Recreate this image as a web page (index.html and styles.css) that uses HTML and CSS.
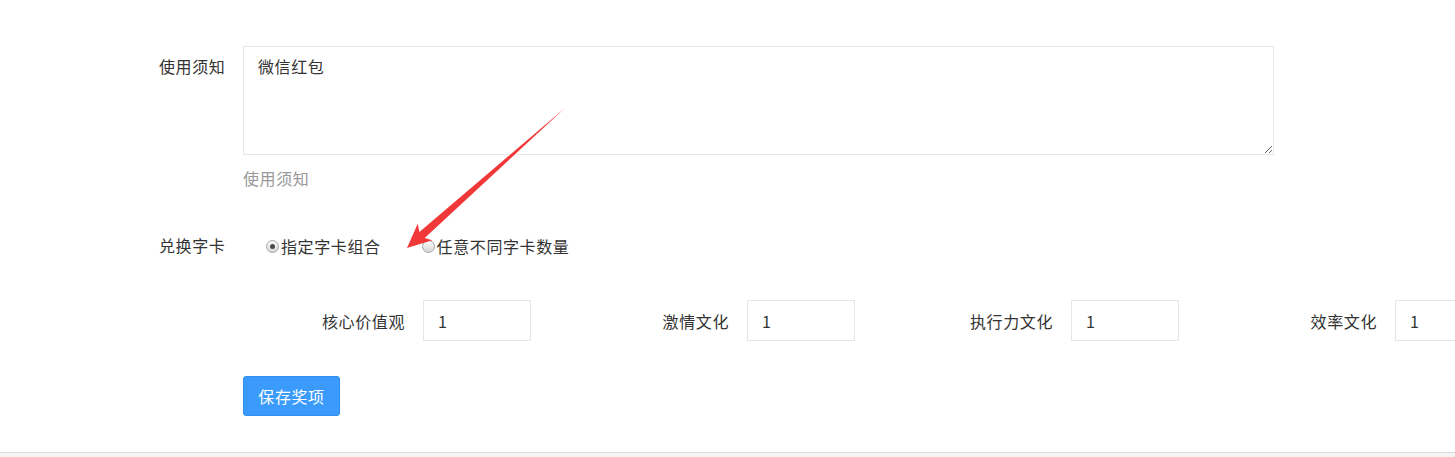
FILE: index.html
```html
<!DOCTYPE html>
<html lang="zh-CN">
  <head>
    <meta charset="UTF-8" />
    <meta name="viewport" content="width=device-width, initial-scale=1.0" />
    <title>奖项设置</title>
    <link rel="stylesheet" href="styles.css">
  </head>
  <body>
    <div class="page">
      <form class="form">
        <div class="form-row">
          <label class="form-label">使用须知</label>
          <div class="form-field">
            <textarea class="notice-input">微信红包</textarea>
            <p class="help-text">使用须知</p>
          </div>
        </div>

        <div class="form-row radio-row">
          <label class="form-label">兑换字卡</label>
          <div class="form-field radios">
            <label class="radio-item">
              <input type="radio" name="mode" class="radio" checked />指定字卡组合
            </label>
            <label class="radio-item">
              <input type="radio" name="mode" class="radio" />任意不同字卡数量
            </label>
          </div>
        </div>

        <div class="card-grid">
          <div class="card-item">
            <span class="card-label">核心价值观</span>
            <input type="text" class="card-input" value="1" />
          </div>
          <div class="card-item">
            <span class="card-label">激情文化</span>
            <input type="text" class="card-input" value="1" />
          </div>
          <div class="card-item">
            <span class="card-label">执行力文化</span>
            <input type="text" class="card-input" value="1" />
          </div>
          <div class="card-item">
            <span class="card-label">效率文化</span>
            <input type="text" class="card-input" value="1" />
          </div>
        </div>

        <div class="actions">
          <button type="button" class="save-btn">保存奖项</button>
        </div>
      </form>

      <!-- annotation arrow drawn on top of the screenshot -->
      <svg class="arrow" width="1455" height="457" viewBox="0 0 1455 457">
        <polygon
          points="407,248 417.7,223.8 419.4,232 565,108 424.7,238 432.3,240.2"
          fill="#f03838"
        />
      </svg>
    </div>
    <div class="page-bottom"></div>
  </body>
</html>
```

FILE: styles.css
```css
* {
  margin: 0;
  padding: 0;
  box-sizing: border-box;
}

html,
body {
  height: 457px;
  overflow: hidden;
}

body {
  background: #fff;
  font-family: "Noto Sans CJK SC", "Microsoft YaHei", sans-serif;
  font-size: 16px;
  line-height: 22px;
  letter-spacing: 0.6px;
  color: #333;
}

.page {
  position: relative;
  height: 452px;
  padding-top: 46px;
}

.form-row {
  display: flex;
  padding-left: 159px;
}

.form-label {
  width: 84px;
  flex-shrink: 0;
  padding-top: 9px;
}

.form-field {
  flex: 1;
}

.notice-input {
  display: block;
  width: 1031px;
  height: 109px;
  padding: 8px 14px;
  border: 1px solid #e6e6e6;
  font-family: inherit;
  font-size: 16px;
  line-height: 22px;
  letter-spacing: 0.6px;
  color: #333;
  resize: vertical;
  outline: none;
}

.help-text {
  margin-top: 12px;
  margin-bottom: 1px;
  color: #999;
}

.radio-row {
  margin-top: 44px;
}

.radio-row .form-label {
  padding-top: 0;
}

.radios {
  display: flex;
  padding-left: 23px;
  padding-top: 1px;
}

.radio-item {
  display: flex;
  align-items: center;
  margin-right: 41px;
}

.radio {
  appearance: none;
  -webkit-appearance: none;
  width: 13px;
  height: 13px;
  margin-right: 2px;
  border: 1px solid #a6a6a6;
  border-radius: 50%;
  background: linear-gradient(#fdfdfd, #d6d6d6);
  position: relative;
}

.radio:checked::after {
  content: "";
  position: absolute;
  left: 3px;
  top: 3px;
  width: 5px;
  height: 5px;
  border-radius: 50%;
  background: #4a4a4a;
}

.card-grid {
  display: grid;
  grid-template-columns: repeat(4, 324px);
  padding-left: 207px;
  margin-top: 43px;
}

.card-item {
  display: flex;
  align-items: center;
}

.card-label {
  flex: 1;
  text-align: right;
  padding-right: 18px;
}

.card-input {
  width: 108px;
  height: 41px;
  padding: 0 14px;
  border: 1px solid #e6e6e6;
  font-family: inherit;
  font-size: 16px;
  color: #333;
  outline: none;
}

.actions {
  padding-left: 243px;
  margin-top: 35px;
}

.save-btn {
  width: 97px;
  height: 40px;
  border: 1px solid #2f8ff0;
  border-radius: 3px;
  background: #3a9bfc;
  color: #fff;
  font-family: inherit;
  font-size: 16px;
  letter-spacing: 0.6px;
  cursor: pointer;
}

.arrow {
  position: absolute;
  left: 0;
  top: 0;
  pointer-events: none;
}

.page-bottom {
  height: 5px;
  border-top: 1px solid #d9d9d9;
  background: #f4f4f4;
}
```
